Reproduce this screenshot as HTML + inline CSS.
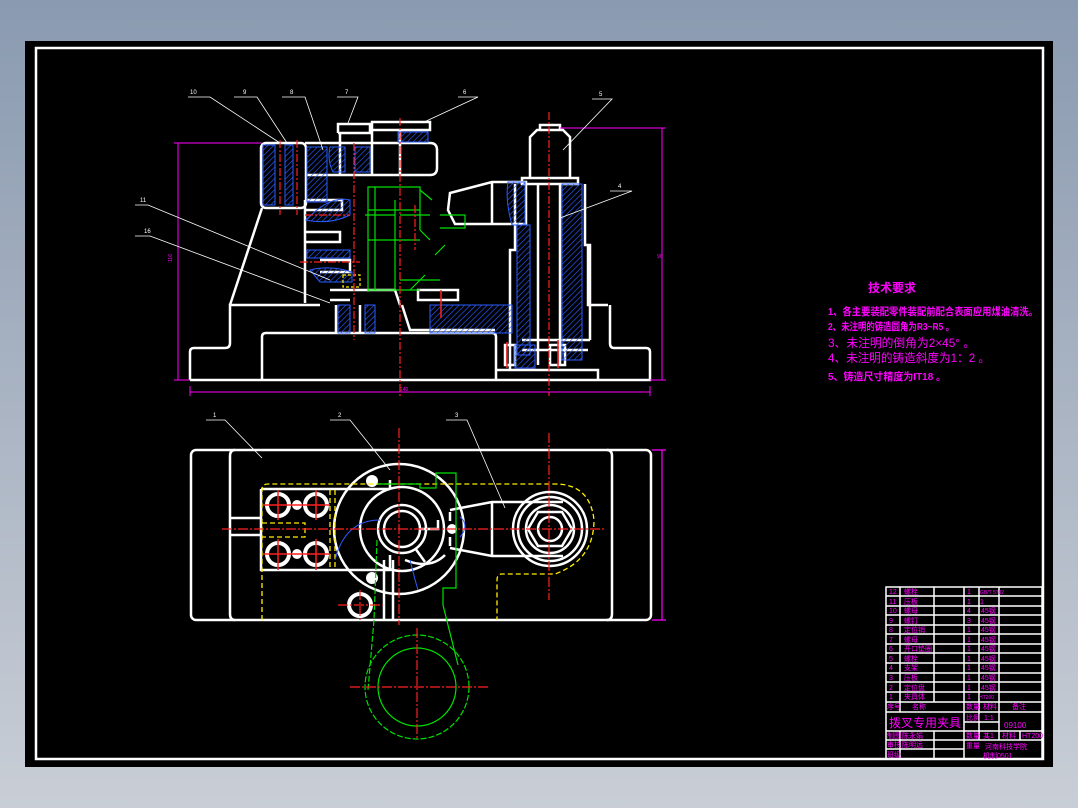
<!DOCTYPE html>
<html><head><meta charset="utf-8"><style>
html,body{margin:0;padding:0;width:1078px;height:808px;overflow:hidden;background:linear-gradient(#8a9ab0,#c9ced6);}
svg{position:absolute;left:0;top:0}
</style></head><body>
<svg width="1078" height="808" viewBox="0 0 1078 808" font-family="Liberation Sans, Noto Sans CJK SC, sans-serif">
<defs>
<pattern id="h" width="4" height="4" patternUnits="userSpaceOnUse" patternTransform="rotate(45)"><line x1="0" y1="0" x2="0" y2="4" stroke="#2a5cff" stroke-width="1.3"/></pattern>
</defs>
<rect x="25" y="41" width="1028" height="726" fill="#000"/>
<rect x="36" y="48" width="1007" height="711" fill="none" stroke="#fff" stroke-width="2.5"/>

<!-- FRONT VIEW -->
<g fill="none" stroke="#fff" stroke-width="2.5">
<path d="M190,380 V352 Q190,348 194,348 H225 Q230,348 230,343 V305 H320"/>
<path d="M610,305 V343 Q610,348 614,348 H646 Q650,348 650,352 V380 H190"/>
<path d="M262,380 V337 Q262,333 266,333 H492 Q496,333 496,337 V380"/>
<path d="M497,370 H598 V380"/>
<path d="M588,245 V305 H608"/>
<path d="M262,208 L230,305"/>
<path d="M305,200 V303"/>
<rect x="261" y="143" width="45" height="65" rx="5"/>
<path d="M305,143 H430 Q437,143 437,150 V168 Q437,175 430,175 H305"/>
<path d="M338,133 V124 H370 V133 H338 M340,133 V175 M372,122 H430 V130 H372 Z M372,130 V175 M400,130 V175"/>
<path d="M305,200 H342 V210 H305 M305,232 H340 V242 H305 M320,260 H350 V272 H320"/>
<path d="M330,290 H395 L400,305 M330,300 H350 M336,305 V333 M360,305 V333"/>
<path d="M450,193 L492,182 H526 V224 H455 L448,210 Z M492,182 V224"/>
<path d="M522,178 H578 V184 H522 Z"/>
<path d="M530,178 V137 L537,130 H563 L570,137 V178 M540,130 V125 H560 V130"/>
<path d="M515,184 V250 H510 V370 M585,184 V245 H590 V340 M538,184 V365 M560,184 V365 M522,340 H590 M522,350 H588"/>
<path d="M505,345 H515 V365 H505 Z M550,345 H565 V365 H550 Z"/>
<path d="M418,290 H458 V300 H418 Z M402,305 L410,330 H495"/>
</g>
<g fill="url(#h)" stroke="#2a5cff" stroke-width="1">
<rect x="263" y="145" width="12" height="60"/>
<rect x="285" y="145" width="8" height="60"/>
<rect x="307" y="147" width="20" height="55"/>
<path d="M330,147 H345 V172 H333 Q327,160 330,147Z"/>
<rect x="355" y="147" width="15" height="25"/>
<path d="M398,132 H428 V142 H398Z"/>
<path d="M306,220 Q330,195 350,200 V215 Q330,225 306,220Z"/>
<path d="M307,250 H350 V258 H307Z M310,270 Q330,265 352,272 V282 H320Z"/>
<path d="M338,305 H350 V333 H338Z M365,305 H375 V333 H365Z"/>
<path d="M430,305 H512 V333 H430Z"/>
<path d="M508,182 H525 V225 H512 Q505,200 508,182Z"/>
<path d="M517,225 H530 V355 H517Z M562,184 H582 V360 H562Z"/>
<path d="M515,345 H535 V368 H515Z"/>
</g>
<g fill="none" stroke="#00e000" stroke-width="1.2">
<path d="M368,187 H420 V210 H368 Z M368,187 V292 M420,187 V230 M368,240 H420 M368,290 H420 M375,187 V290 M395,200 V290"/>
<path d="M365,215 H395 M400,215 H430 M440,215 H465 V228 H440 M420,230 L430,240 M435,255 L445,245 M420,190 L432,200 M400,280 H440 M410,290 L425,275"/>
</g>
<g fill="none" stroke="#ffee00" stroke-width="1.2" stroke-dasharray="3,2"><path d="M343,275 H360 V287 H343Z"/></g>
<g fill="none" stroke="#ff2020" stroke-width="1.2" stroke-dasharray="8,2,2,2">
<path d="M400,118 V396 M549,112 V396 M354,143 V340 M280,140 V215 M297,140 V215 M415,205 V250"/>
<path d="M305,215 H350 M300,262 H360"/>
</g>
<g fill="none" stroke="#ff2020" stroke-width="1.5"><path d="M441,290 V318 M507,342 V368 M558,340 V368"/></g>
<g stroke="#ff00ff" stroke-width="1" fill="none">
<path d="M178,143 V380 M174,143 H262 M174,380 H190 M190,392 H650 M190,386 V396 M650,386 V396 M662,128 V380 M560,128 H666 M650,380 H666"/>
</g>
<g fill="#ff00ff" font-size="5"><text x="172" y="262" transform="rotate(-90 172 262)">116</text><text x="400" y="391">140</text><text x="657" y="258">96</text></g>
<g stroke="#fff" stroke-width="0.8" fill="none">
<path d="M188,97 H210 L280,143 M234,97 H257 L287,143 M282,97 H305 L323,150 M337,97 H358 L348,123 M458,97 H478 L422,123 M592,99 H612 L563,150 M610,191 H632 L560,218 M135,205 H148 L330,280 M135,236 H150 L330,303"/>
</g>
<g fill="#fff" font-size="6"><text x="190" y="94">10</text><text x="243" y="94">9</text><text x="290" y="94">8</text><text x="345" y="94">7</text><text x="463" y="94">6</text><text x="599" y="96">5</text><text x="618" y="188">4</text><text x="140" y="202">11</text><text x="144" y="233">16</text></g>

<!-- TOP VIEW -->
<g fill="none" stroke="#fff" stroke-width="2.5">
<rect x="191" y="450" width="460" height="170" rx="5"/>
<path d="M235,450 Q230,450 230,456 V614 Q230,620 235,620 M607,450 Q612,450 612,456 V614 Q612,620 607,620"/>
<path d="M230,518 H262 M230,535 H262"/>
<path d="M261,489 H390 M261,489 V570 H390 V555 M390,489 V480"/>
<circle cx="399" cy="529" r="65"/>
<circle cx="402" cy="529" r="42"/>
<circle cx="402" cy="529" r="24"/>
<circle cx="402" cy="529" r="18"/>
<path d="M420,529 H438 V520 M415,548 L425,562 M405,560 Q430,570 445,555"/>
<path d="M384,560 V620 M393,560 V620"/>
<path d="M450,510 L492,502 H563 M450,548 L492,556 H563 M492,502 V556 M450,512 V521 M450,537 V546"/>
<circle cx="550" cy="529" r="37"/>
<circle cx="550" cy="529" r="32"/>
<circle cx="550" cy="529" r="24"/>
<path d="M538,512 H562 L572,529 L562,546 H538 L528,529 Z"/>
<circle cx="550" cy="529" r="12"/>
<circle cx="360" cy="605" r="11" stroke-width="4"/>
</g>
<g fill="none" stroke="#fff" stroke-width="4">
<circle cx="278" cy="505" r="11"/><circle cx="316" cy="505" r="11"/><circle cx="278" cy="554" r="11"/><circle cx="316" cy="554" r="11"/>
</g>
<g fill="#fff"><circle cx="297" cy="505" r="5"/><circle cx="297" cy="554" r="5"/><circle cx="372" cy="481" r="6"/><circle cx="372" cy="578" r="6"/><circle cx="452" cy="529" r="5"/></g>
<g fill="none" stroke="#ffee00" stroke-width="1.3" stroke-dasharray="5,3">
<path d="M262,620 V490 Q262,484 268,484 H555 Q590,484 594,520 Q594,560 555,574 H502 Q497,574 497,580 V620"/>
<path d="M262,523 H305 V537 H262 M330,490 V570 M335,490 V570"/>
</g>
<g fill="none" stroke="#00e000" stroke-width="1.2">
<path d="M378,484 H420 V488 H436 V473 H456 V588 H443 V605 L458,665"/>
<path d="M377,540 L374,620 L368,690" stroke-dasharray="6,2"/>
<circle cx="417" cy="687" r="52" stroke-dasharray="6,2"/>
<circle cx="417" cy="687" r="39"/>
</g>
<g fill="none" stroke="#2a5cff" stroke-width="1"><path d="M335,560 Q345,520 380,520 M460,517 Q470,525 460,537 M410,560 Q415,580 418,590"/></g>
<g fill="none" stroke="#ff2020" stroke-width="1.2" stroke-dasharray="10,2,2,2">
<path d="M222,529 H605 M399,428 V625 M549,433 V600 M350,687 H490 M417,628 V740 M338,605 H383 M360,590 V622"/>
</g>
<g stroke="#ff2020" stroke-width="1.5"><path d="M263,505 H330 M263,554 H330 M278,490 V520 M316,490 V520 M278,539 V570 M316,539 V570"/></g>
<g stroke="#ff00ff" stroke-width="1.2" fill="none"><path d="M662,450 V620 M652,450 H666 M652,620 H666"/></g>
<g stroke="#fff" stroke-width="0.8" fill="none"><path d="M206,420 H225 L262,458 M330,420 H350 L390,470 M446,420 H467 L505,508"/></g>
<g fill="#fff" font-size="6"><text x="213" y="417">1</text><text x="338" y="417">2</text><text x="455" y="417">3</text></g>

<!-- tech requirements -->
<g fill="#ff00ff" font-weight="bold">
<text x="868" y="292" font-size="12" textLength="48" lengthAdjust="spacingAndGlyphs">技术要求</text>
<text x="828" y="315" font-size="10.5" textLength="210" lengthAdjust="spacingAndGlyphs">1、各主要装配零件装配前配合表面应用煤油清洗。</text>
<text x="828" y="330" font-size="10.5" textLength="126" lengthAdjust="spacingAndGlyphs">2、未注明的铸造圆角为R3~R5 。</text>
<text x="828" y="347" font-size="12" font-weight="normal" textLength="147" lengthAdjust="spacingAndGlyphs">3、未注明的倒角为2×45° 。</text>
<text x="828" y="362" font-size="12" font-weight="normal" textLength="162" lengthAdjust="spacingAndGlyphs">4、未注明的铸造斜度为1：2 。</text>
<text x="828" y="380" font-size="10.5" textLength="118" lengthAdjust="spacingAndGlyphs">5、铸造尺寸精度为IT18 。</text>
</g>

<!-- title block -->
<g stroke="#fff" stroke-width="1.5" fill="none">
<rect x="886" y="587" width="156" height="172"/>
<path d="M886,596 H1042 M886,606 H1042 M886,615 H1042 M886,625 H1042 M886,634 H1042 M886,644 H1042 M886,653 H1042 M886,663 H1042 M886,673 H1042 M886,682 H1042 M886,692 H1042 M886,702 H1042 M886,712 H1042 M964,722 H999 M886,731 H1042 M964,740 H1042 M886,740 H964 M886,749 H964"/>
<path d="M900,587 V712 M934,587 V702 M964,587 V759 M979,587 V740 M999,587 V740 M900,731 V759 M934,731 V759 M1020,731 V740"/>
</g>
<g fill="#ff00ff" font-size="7">
<text x="904" y="594">螺栓</text><text x="889" y="594">12</text><text x="889" y="604">11</text><text x="904" y="604">压板</text>
<text x="889" y="613">10</text><text x="904" y="613">螺母</text><text x="889" y="623">9</text><text x="904" y="623">螺钉</text>
<text x="889" y="632">8</text><text x="904" y="632">定位销</text><text x="889" y="642">7</text><text x="904" y="642">螺母</text>
<text x="889" y="651">6</text><text x="904" y="651">开口垫圈</text><text x="889" y="661">5</text><text x="904" y="661">螺栓</text>
<text x="889" y="670">4</text><text x="904" y="670">支架</text><text x="889" y="680">3</text><text x="904" y="680">压板</text>
<text x="889" y="690">2</text><text x="904" y="690">定位盘</text><text x="889" y="699">1</text><text x="904" y="699">夹具体</text>
<text x="887" y="709">序号</text><text x="912" y="709">名称</text><text x="966" y="709">数量</text><text x="983" y="709">材料</text><text x="1012" y="709">备注</text>
<text x="966" y="720">比例</text><text x="984" y="720">1:1</text><text x="966" y="738">数量</text><text x="985" y="738">1</text>
<text x="1004" y="728" font-size="8">09100</text>
<text x="887" y="738">制图</text><text x="902" y="738">陈永娟</text><text x="966" y="748">重量</text><text x="983" y="738">共1</text><text x="1002" y="738">材料</text><text x="1022" y="738">HT200</text>
<text x="887" y="747">审核</text><text x="902" y="747">陈明远</text><text x="887" y="757">班级</text>
<text x="985" y="749">河南科技学院</text><text x="983" y="758">机制0501</text>
<text x="980" y="594" font-size="5">GB/T 5782</text><text x="980" y="604">1</text>
<text x="967" y="594">1</text><text x="967" y="604">1</text><text x="967" y="613">4</text><text x="967" y="623">3</text><text x="967" y="632">1</text><text x="967" y="642">1</text><text x="967" y="651">1</text><text x="967" y="661">1</text><text x="967" y="670">1</text><text x="967" y="680">1</text><text x="967" y="690">1</text><text x="967" y="699">1</text>
<text x="981" y="613">45钢</text><text x="981" y="623">45钢</text><text x="981" y="632">45钢</text><text x="981" y="642">45钢</text><text x="981" y="651">45钢</text><text x="981" y="661">45钢</text><text x="981" y="670">45钢</text><text x="981" y="680">45钢</text><text x="981" y="690">45钢</text><text x="979" y="699" font-size="5">HT200</text>
<text x="889" y="727" font-size="12">拨叉专用夹具</text>
</g>
</svg>
</body></html>
